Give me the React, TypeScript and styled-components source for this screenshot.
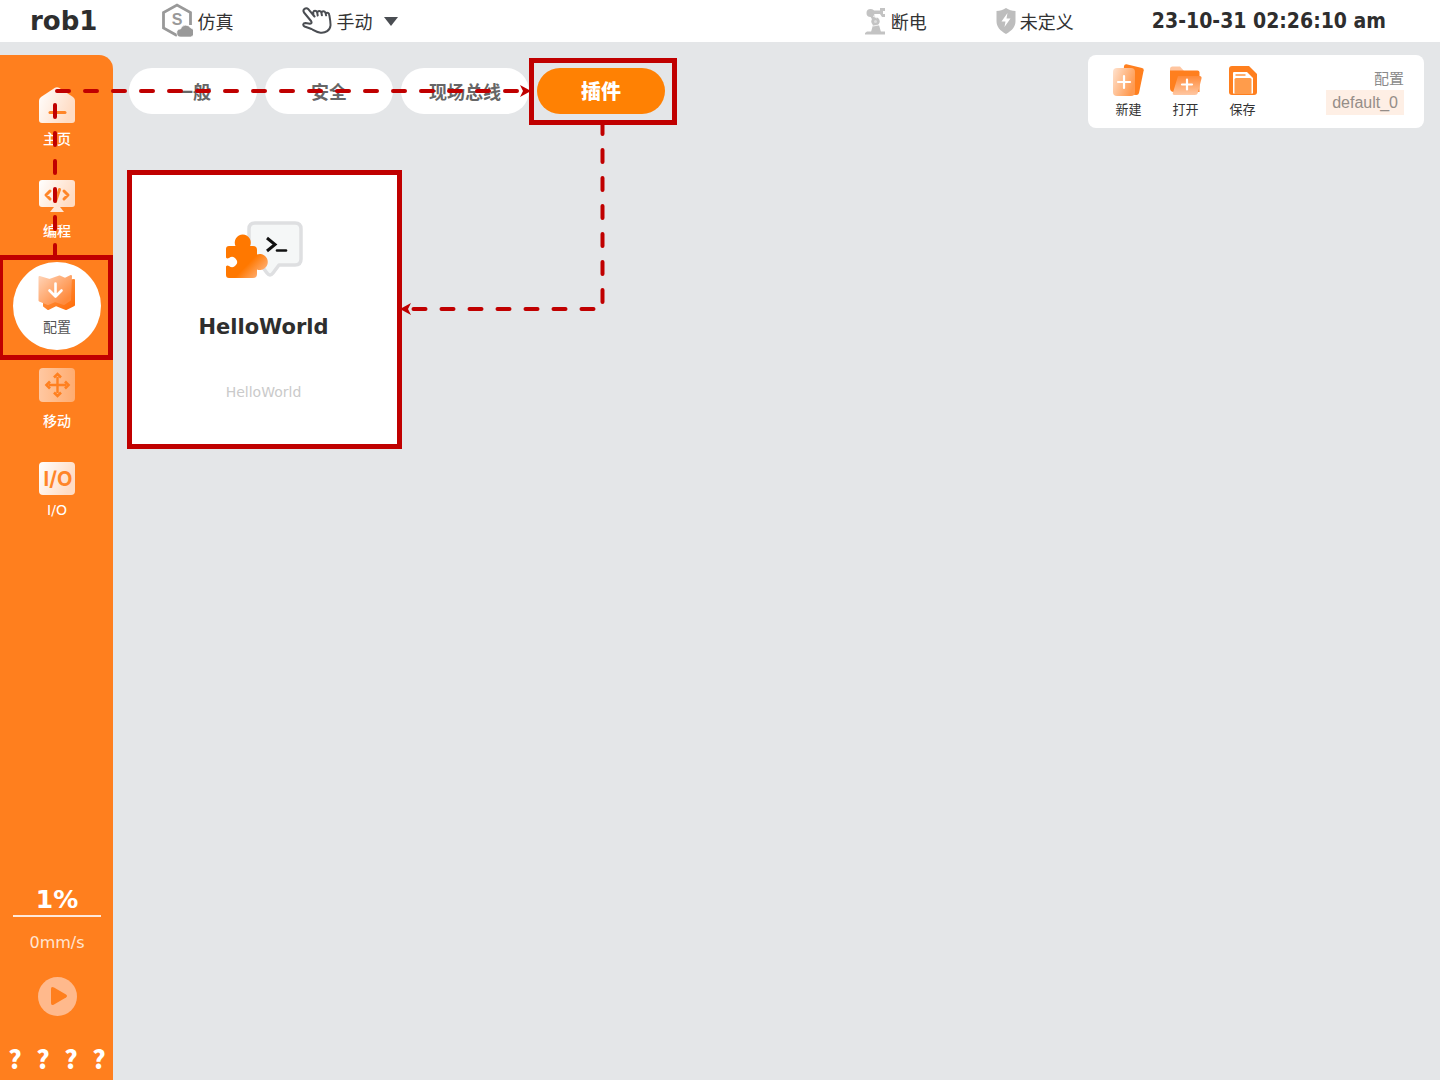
import React from "react";
import styled, { createGlobalStyle } from "styled-components";

const cjk = `"Noto Sans CJK SC", "Noto Sans", sans-serif`;
const latin = `"DejaVu Sans", "Noto Sans CJK SC", sans-serif`;
const mark = "#c00000";

const GlobalStyle = createGlobalStyle`
  *, *::before, *::after { box-sizing: border-box; }
  body { margin: 0; background: #e4e6e8; font-family: ${cjk}; color: #333; }
  button { border: 0; padding: 0; background: none; font: inherit; color: inherit; cursor: pointer; }
  svg { display: block; flex: none; }
`;

const Page = styled.div`
  position: relative;
  min-height: 100vh;
  display: flex;
  flex-direction: column;
  overflow: hidden;
`;

const Header = styled.header`
  height: 42px;
  display: flex;
  align-items: center;
  padding: 0 54px 0 30px;
  background: #fff;
  font-size: 18px;
`;

const RobotName = styled.h1`
  margin: 0 64px 0 0;
  font: bold 26px/44px ${latin};
  color: #2e2e2e;
`;

const HeaderButton = styled.button<{ $end: number }>`
  display: flex;
  align-items: center;
  gap: 4px;
  margin-right: ${(p) => p.$end}px;
  line-height: 44px;
`;

const Status = styled.div`
  margin-left: auto;
  display: flex;
  align-items: center;
`;

const Caret = styled.span`
  margin-left: 8px;
  border: 7px solid transparent;
  border-top: 9px solid #4a4d52;
  border-bottom: 0;
`;

const Clock = styled.time`
  font: bold 21px/42px "DejaVu Sans Condensed", ${latin};
  color: #2e2e2e;
`;

const Body = styled.div`
  flex: 1;
  display: flex;
  padding-top: 13px;
`;

const Sidebar = styled.aside`
  width: 113px;
  flex: none;
  display: flex;
  flex-direction: column;
  padding: 19px 12px 6px 13px;
  border-radius: 0 14px 0 0;
  background: #ff7f1e;
  color: #fff;
`;

const Nav = styled.nav`
  display: flex;
  flex-direction: column;
  gap: 6px;
`;

const NavButton = styled.button<{ $active?: boolean }>`
  position: relative;
  height: 88px;
  display: flex;
  flex-direction: column;
  align-items: center;
  gap: 4px;
  padding-top: 12px;
  border-radius: 50%;
  background: ${(p) => (p.$active ? "#fff" : "transparent")};
  color: ${(p) => (p.$active ? "#555" : "#fff")};
  font: ${(p) => (p.$active ? 400 : 500)} 14px/20px ${cjk};
`;

const LatinLabel = styled.span`
  font-family: ${latin};
  font-weight: 400;
`;

const Highlight = styled.span<{ $inset: string }>`
  position: absolute;
  inset: ${(p) => p.$inset};
  border: 5px solid ${mark};
  pointer-events: none;
`;

const Motion = styled.div`
  margin-top: auto;
  display: flex;
  flex-direction: column;
  align-items: center;
`;

const SpeedButton = styled.button`
  align-self: stretch;
  border-bottom: 2px solid #ffe9da;
  font: bold 25px/30px ${latin};
`;

const Velocity = styled.span`
  margin: 14px 0 22px;
  color: #ffe5d2;
  font: 16px/24px ${latin};
`;

const Unknowns = styled.div`
  display: flex;
  gap: 16px;
  margin-top: 26px;
  font: 900 25px/32px ${cjk};
`;

const Mark = styled.span`
  width: 12px;
  display: flex;
  justify-content: center;
`;

const Main = styled.main`
  flex: 1;
  padding: 0 16px;
`;

const TopRow = styled.div`
  display: flex;
  justify-content: space-between;
  align-items: flex-start;
`;

const Tabs = styled.div`
  display: flex;
  gap: 8px;
  padding-top: 13px;
`;

const Tab = styled.button<{ $active?: boolean }>`
  position: relative;
  width: 128px;
  height: 46px;
  border-radius: 23px;
  background: ${(p) => (p.$active ? "#ff8103" : "#fff")};
  color: ${(p) => (p.$active ? "#fff" : "#666")};
  font: ${(p) => (p.$active ? "900 20px" : "700 18px")} / 46px ${cjk};
`;

const FilePanel = styled.section`
  width: 336px;
  height: 73px;
  display: flex;
  padding: 8px 20px 0 12px;
  border-radius: 8px;
  background: #fff;
`;

const FileButton = styled.button`
  width: 57px;
  height: 56px;
  display: flex;
  flex-direction: column;
  align-items: center;
  font: 13px/20px ${cjk};
`;

const FileInfo = styled.div`
  margin-left: auto;
  padding-top: 3px;
  display: flex;
  flex-direction: column;
  align-items: flex-end;
  color: #8a8a8a;
  font: 15px/24px ${cjk};
`;

const FileName = styled.span`
  padding: 0 6px;
  background: #feefe5;
  color: #958d88;
  font: 16px/25px "Liberation Sans", sans-serif;
`;

const PluginCard = styled.button`
  position: relative;
  width: 271px;
  height: 275px;
  margin-top: 44px;
  display: flex;
  flex-direction: column;
  align-items: center;
  padding: 49px 2px 0 0;
  background: #fff;
  font-family: ${latin};
`;

const PluginName = styled.strong`
  margin: 34px 0 39px;
  font-size: 21px;
  line-height: 28px;
  color: #2e2e2e;
`;

const PluginNote = styled.span`
  font-size: 14px;
  line-height: 24px;
  color: #cacaca;
`;

const Overlay = styled.svg`
  position: absolute;
  top: 0;
  left: 0;
  pointer-events: none;
`;

const Gradients = () => (
  <svg width="0" height="0" style={{ position: "absolute" }} aria-hidden>
    <defs>
      <linearGradient id="pale" x1="0" y1="0" x2="1" y2="0.4">
        <stop offset="0" stopColor="#fff" />
        <stop offset="1" stopColor="#ffdcc4" />
      </linearGradient>
      <linearGradient id="glass" x1="0" y1="0" x2="1" y2="0.5">
        <stop offset="0" stopColor="#ffe3d0" />
        <stop offset="1" stopColor="#ff9a50" />
      </linearGradient>
      <linearGradient id="sheet" x1="0" y1="0" x2="1" y2="0.9">
        <stop offset="0" stopColor="#ffd2b5" />
        <stop offset="0.9" stopColor="#ff8a3c" />
      </linearGradient>
      <linearGradient id="deep" x1="0" y1="0" x2="1" y2="1">
        <stop offset="0" stopColor="#ff9c50" />
        <stop offset="1" stopColor="#ff6d0a" />
      </linearGradient>
      <linearGradient id="folder" x1="0" y1="0" x2="0" y2="1">
        <stop offset="0" stopColor="#ff8a38" />
        <stop offset="1" stopColor="#ffc7a2" />
      </linearGradient>
      <linearGradient id="move" x1="0" y1="0" x2="1" y2="0">
        <stop offset="0" stopColor="#ffc8a2" />
        <stop offset="1" stopColor="#ffac70" />
      </linearGradient>
      <linearGradient id="puzzle" x1="0" y1="0" x2="1" y2="1">
        <stop offset="0.6" stopColor="#ff7800" />
        <stop offset="0.9" stopColor="#ffb37c" />
      </linearGradient>
    </defs>
  </svg>
);

const SimIcon = () => (
  <svg width="32" height="36" viewBox="0 0 32 36">
    <path d="M16 32.500 2.500 25V9.500L16 2l13.500 7.500V22" fill="none" stroke="#999" strokeWidth="2.800" />
    <text x="16" y="22" textAnchor="middle" fontFamily="Liberation Sans, sans-serif" fontSize="16" fontWeight="bold" fill="#999">S</text>
    <path d="M20 34a4 4 0 0 1-.4-8 5.500 5.500 0 0 1 10-1 4.600 4.600 0 0 1-.2 9z" fill="#999" stroke="#fff" strokeWidth="0.600" />
  </svg>
);

const HandIcon = () => (
  <svg width="30" height="28" viewBox="0 0 30 28" fill="none" stroke="#4a4d52" strokeWidth="2" strokeLinecap="round" strokeLinejoin="round">
    <path d="M9 14 2 5.500C.2 2.500 3.800-.2 6.500 2.300L12.500 9.500M11.500 8.300l-.3-3c.6-2 3-2 4 .2l.5 3M15.300 5.800c.2-2.300 3-2.600 4-.5l.6 3M19.500 5.700c.5-2 3-2 4 .1l.6 2.600M23.700 6.600c1.600-1.600 3.300-.6 3.600 1.400.7 4 1.400 7.500 1.200 10.500-.5 5-5 7.700-10 7.200-4-.4-6-2-9-3.700L2.600 19.500c-2.200-1.200-1.500-3.500.8-3.500l4.600.8q2.500-.3 1-2.800" />
  </svg>
);

const ArmIcon = () => (
  <svg width="22" height="28" viewBox="0 0 22 28" fill="#c3c3c3">
    <circle cx="5.500" cy="6" r="4" />
    <path d="M6 3.500h9V1h5v3h-2v3h2v3h-3l-2-3H7zM5 9l4-1 4 6-3 3zM2 24.500h18v3H0V26z" />
    <circle cx="10.500" cy="14.500" r="4.200" />
    <path d="M8 18h6l2 7H6z" />
    <path d="m8 9 4 2M8 19l6-1" stroke="#fff" strokeWidth="0.800" />
    <circle cx="10.500" cy="14.500" r="1.500" fill="#ddd" />
  </svg>
);

const ShieldIcon = () => (
  <svg width="20" height="26" viewBox="0 0 20 26">
    <path d="M10 0c3 2 6 2.800 9.500 3v10c0 6-3.500 9.500-9.500 13C4 22.500.5 19 .5 13V3C4 2.800 7 2 10 0z" fill="#bdbdbd" />
    <path d="M11.500 5 5.500 13.500h4L8.500 19l6-8.500h-4z" fill="#fff" />
  </svg>
);

const HomeIcon = () => (
  <svg width="36" height="38" viewBox="0 0 36 38">
    <path d="M16 1.800q2-1.300 4 0l14 9.200q2 1.500 2 3.500V34q0 3-3 3H3q-3 0-3-3V14.500Q0 12.500 2 11z" fill="url(#pale)" />
    <path d="M11 26.500h15" stroke="#ff8528" strokeWidth="3" strokeLinecap="round" />
  </svg>
);

const CodeIcon = () => (
  <svg width="36" height="36" viewBox="0 0 36 36">
    <rect width="36" height="27" y="0" rx="3" fill="url(#pale)" />
    <path d="M15 27h6l4 5h-14z" fill="#ffe6d5" />
    <path d="m11 11-4 4 4 4M25 11l4 4-4 4M20.500 9.500l-4 12" fill="none" stroke="#ff8528" strokeWidth="3" strokeLinecap="round" strokeLinejoin="round" />
  </svg>
);

const ConfigIcon = () => (
  <svg width="38" height="38" viewBox="0 0 38 38">
    <path d="M6 10 36 6V31l-8 4-10-4-8 4-4-3z" fill="url(#deep)" stroke="url(#deep)" strokeWidth="2" strokeLinejoin="round" />
    <path d="m1.500 3 10 3 10-3.500L27 5l6-3-1 24-6 4-9-3-7 3-8.500-3.500z" fill="url(#sheet)" stroke="url(#sheet)" strokeWidth="2" strokeLinejoin="round" />
    <path d="M17.500 9.500V22M11.500 16.500l6 6 6-6" fill="none" stroke="#fff" strokeWidth="2.600" strokeLinecap="round" strokeLinejoin="round" />
  </svg>
);

const MoveIcon = () => (
  <svg width="36" height="38" viewBox="0 0 36 38">
    <rect width="36" height="34" rx="4" fill="url(#move)" />
    <path d="M18.500 9v16M10 17h17" stroke="#ff8020" strokeWidth="2.400" />
    <path d="m15 9.500 3.500-3.500L22 9.500M15 24.500l3.500 3.500 3.500-3.500M11 13.500 7.500 17l3.500 3.500M26 13.500l3.500 3.500-3.500 3.500" fill="none" stroke="#ff8020" strokeWidth="2.600" />
  </svg>
);

const IoIcon = () => (
  <svg width="36" height="34" viewBox="0 0 36 34">
    <rect width="36" height="33" rx="4" fill="url(#pale)" />
    <text x="19" y="24" textAnchor="middle" fontFamily="Inter, sans-serif" fontSize="20" fontWeight="bold" fill="#ff8528">I/O</text>
  </svg>
);

const PlayIcon = () => (
  <svg width="39" height="39" viewBox="0 0 39 39">
    <circle cx="19.500" cy="19.500" r="19.500" fill="#ffb98c" />
    <path d="M13 12q0-3 3-1.500l12 7q2 1.500 0 3l-12 7q-3 1.500-3-1.500z" fill="#ff7f1e" />
  </svg>
);

const NewIcon = () => (
  <svg width="34" height="36" viewBox="0 0 34 36">
    <path d="M12 3q.5-2 2.500-1.700L30 5q2 .6 1.700 2.300L27 30q-.5 2-2.500 2L10 31z" fill="#ff7f1e" />
    <rect x="1" y="5" width="22" height="28" rx="4" fill="url(#glass)" />
    <path d="M12 13v12M6 19h12" stroke="#fff" strokeWidth="2.200" strokeLinecap="round" />
  </svg>
);

const OpenIcon = () => (
  <svg width="34" height="36" viewBox="0 0 34 36">
    <path d="M1 6q0-2.500 2.500-2.500H11L15 8H1z" fill="#ffc59f" />
    <path d="M1 7.500h27.500q2 0 2 2V29H5q-4 0-4-4z" fill="#ff7f1e" />
    <path d="M9 13h21.500q2.500 0 2 2.500L29 29.500q-.6 2.500-3 2.500H5.500Q3 32 4 29.500z" fill="url(#folder)" />
    <path d="M18 16.500v10M13 21.500h10" stroke="#fff" strokeWidth="2.200" strokeLinecap="round" />
  </svg>
);

const SaveIcon = () => (
  <svg width="34" height="36" viewBox="0 0 34 36">
    <path d="M3 6q0-3 3-3h17l8 8v18q0 3-3 3H6q-3 0-3-3z" fill="#ff7f1e" />
    <path d="M7 30.500V10q0-1 1-1h13l6 6v15.500z" fill="#fff" />
    <path d="M9.500 12h10" stroke="#ff9c4b" strokeWidth="1.600" />
    <rect x="8.500" y="15" width="17" height="16" rx="1.500" fill="#ff9c4b" />
  </svg>
);

const PluginIcon = () => (
  <svg width="78" height="58" viewBox="0 0 78 58">
    <path d="M30 2h40q6 0 6 6v30q0 6-6 6H54l-6 8q-3 4-6 0l-6-8h-8q-4 0-4-6V8q0-6 6-6z" fill="#f5f7f7" stroke="#dedfe1" strokeWidth="3.500" strokeLinejoin="round" />
    <path d="m42 17 8 6.500L42 30" fill="none" stroke="#111" strokeWidth="3" />
    <path d="M52 29.500h9" stroke="#111" strokeWidth="2.600" strokeLinecap="round" />
    <path d="M4 25h6.500a8 8 0 1 1 14.500 0h3q4 0 4 4v4.500a8 8 0 1 1 0 15V53q0 4-4 4H4q-3 0-3-3v-8.500q1-1.500 3-.5a5 5 0 1 0 0-8q-2 1-3-.5V28q0-3 3-3z" fill="url(#puzzle)" />
  </svg>
);

const navItems = [
  { label: "主页", icon: <HomeIcon /> },
  { label: "编程", icon: <CodeIcon /> },
  { label: "配置", icon: <ConfigIcon />, active: true },
  { label: "移动", icon: <MoveIcon /> },
  { label: <LatinLabel>I/O</LatinLabel>, icon: <IoIcon /> },
];

const tabs = ["一般", "安全", "现场总线", "插件"];

const fileActions = [
  { label: "新建", icon: <NewIcon /> },
  { label: "打开", icon: <OpenIcon /> },
  { label: "保存", icon: <SaveIcon /> },
];

export default function App() {
  return (
    <Page>
      <GlobalStyle />
      <Gradients />
      <Header>
        <RobotName>rob1</RobotName>
        <HeaderButton $end={69}><SimIcon />仿真</HeaderButton>
        <HeaderButton $end={0}><HandIcon />手动<Caret /></HeaderButton>
        <Status>
          <HeaderButton $end={69}><ArmIcon />断电</HeaderButton>
          <HeaderButton $end={78}><ShieldIcon />未定义</HeaderButton>
          <Clock>23-10-31 02:26:10 am</Clock>
        </Status>
      </Header>
      <Body>
        <Sidebar>
          <Nav>
            {navItems.map((item, i) => (
              <NavButton key={i} $active={item.active}>
                {item.icon}
                {item.label}
                {item.active && <Highlight $inset="-7px -12px -10px -15px" />}
              </NavButton>
            ))}
          </Nav>
          <Motion>
            <SpeedButton>1%</SpeedButton>
            <Velocity>0mm/s</Velocity>
            <button aria-label="Play"><PlayIcon /></button>
            <Unknowns>
              {[0, 1, 2, 3].map((n) => <Mark key={n}>?</Mark>)}
            </Unknowns>
          </Motion>
        </Sidebar>
        <Main>
          <TopRow>
            <Tabs>
              {tabs.map((name) => (
                <Tab key={name} $active={name === "插件"}>
                  {name}
                  {name === "插件" && <Highlight $inset="-10px -12px -11px -8px" />}
                </Tab>
              ))}
            </Tabs>
            <FilePanel>
              {fileActions.map((action) => (
                <FileButton key={action.label}>{action.icon}{action.label}</FileButton>
              ))}
              <FileInfo>
                配置
                <FileName>default_0</FileName>
              </FileInfo>
            </FilePanel>
          </TopRow>
          <PluginCard>
            <PluginIcon />
            <PluginName>HelloWorld</PluginName>
            <PluginNote>HelloWorld</PluginNote>
            <Highlight $inset="-2px" />
          </PluginCard>
        </Main>
      </Body>
      <Overlay width="700" height="460" aria-hidden>
        <g fill="none" stroke={mark} strokeWidth="4" strokeLinecap="round" strokeDasharray="12 16">
          <path d="M55 257V91H518" />
          <path d="M602.500 122V309H412" />
        </g>
        <path d="m531 91-11-6 3 6-3 6zM400 309l11-6-3 6 3 6z" fill={mark} />
      </Overlay>
    </Page>
  );
}
